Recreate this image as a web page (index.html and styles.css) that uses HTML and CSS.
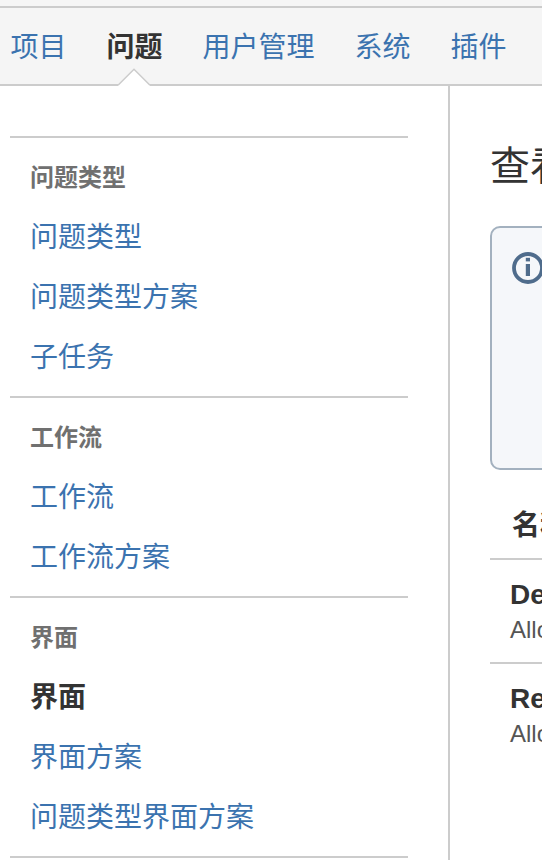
FILE: index.html
```html
<!DOCTYPE html>
<html lang="zh-CN">
<head>
    <meta charset="UTF-8">
    <meta name="viewport" content="width=device-width, initial-scale=1.0">
    <title>界面</title>
    <link rel="stylesheet" href="styles.css">
</head>
<body>
    <nav class="admin-nav">
        <a class="nav-item" href="#">项目</a>
        <a class="nav-item nav-active" href="#">问题
            <svg class="nav-arrow" width="34" height="18" viewBox="0 0 34 18">
                <path d="M1 18V17L17 1.5L33 17V18Z" fill="#fff"/>
                <path d="M1 17.3L17 1.3L33 17.3" fill="none" stroke="#ccc" stroke-width="1.5"/>
            </svg>
        </a>
        <a class="nav-item" href="#">用户管理</a>
        <a class="nav-item" href="#">系统</a>
        <a class="nav-item" href="#">插件</a>
    </nav>

    <div class="page">
        <aside class="sidebar">
            <div class="menu-group">
                <h4 class="menu-title">问题类型</h4>
                <a class="menu-link" href="#">问题类型</a>
                <a class="menu-link" href="#">问题类型方案</a>
                <a class="menu-link" href="#">子任务</a>
            </div>
            <div class="menu-group">
                <h4 class="menu-title">工作流</h4>
                <a class="menu-link" href="#">工作流</a>
                <a class="menu-link" href="#">工作流方案</a>
            </div>
            <div class="menu-group">
                <h4 class="menu-title">界面</h4>
                <a class="menu-link menu-active" href="#">界面</a>
                <a class="menu-link" href="#">界面方案</a>
                <a class="menu-link" href="#">问题类型界面方案</a>
            </div>
            <div class="menu-group"></div>
        </aside>

        <main class="content">
            <h1 class="page-title">查看</h1>
            <div class="info-box">
                <svg class="info-icon" width="32" height="32" viewBox="0 0 32 32">
                    <circle cx="16" cy="16" r="14" fill="none" stroke="#4f6c8c" stroke-width="3.8"/>
                    <rect x="13.8" y="5.8" width="4.2" height="3.6" fill="#4f6c8c"/>
                    <rect x="13.8" y="12" width="4.2" height="12" fill="#4f6c8c"/>
                </svg>
            </div>
            <div class="table">
                <div class="table-head">名称</div>
                <div class="table-row">
                    <div class="row-name">De</div>
                    <div class="row-desc">Allo</div>
                </div>
                <div class="table-row">
                    <div class="row-name">Re</div>
                    <div class="row-desc">Allo</div>
                </div>
            </div>
        </main>
    </div>
</body>
</html>
```

FILE: styles.css
```css
* {
    margin: 0;
    padding: 0;
    box-sizing: border-box;
}

body {
    height: 860px;
    overflow: hidden;
    display: flex;
    flex-direction: column;
    font-family: "Liberation Sans", Arial, "Noto Sans CJK SC", sans-serif;
    font-size: 28px;
    color: #333;
    background: #fff;
    border-top: 6px solid #f5f5f5;
}

a {
    color: #3b73af;
    text-decoration: none;
}

.admin-nav {
    flex: none;
    display: flex;
    gap: 40px;
    height: 80px;
    padding-left: 10.5px;
    background: #f5f5f5;
    border-top: 2px solid #ccc;
    border-bottom: 2px solid #ccc;
}

.nav-item {
    position: relative;
    height: 76px;
    padding-top: 2px;
    line-height: 76px;
    white-space: nowrap;
}

.nav-active {
    color: #333;
    font-weight: bold;
}

/* pointer over the bottom border of the bar */
.nav-arrow {
    position: absolute;
    left: 10.5px;
    bottom: -2px;
}

.page {
    flex: 1;
    display: flex;
    min-height: 0;
}

.sidebar {
    flex: none;
    width: 450px;
    padding: 50px 40px 0 10px;
    border-right: 2px solid #ccc;
}

.menu-group {
    padding: 20px 0 8px 20px;
    border-top: 2px solid #ccc;
}

.menu-title {
    margin-bottom: 10px;
    font-size: 24px;
    line-height: 40px;
    color: #707070;
}

.menu-link {
    display: block;
    line-height: 60px;
}

.menu-active {
    color: #333;
    font-weight: bold;
}

.content {
    flex: 1;
    min-width: 0;
    padding: 50px 0 0 40px;
    overflow: hidden;
    white-space: nowrap;
}

.page-title {
    font-size: 40px;
    font-weight: normal;
    line-height: 60px;
    margin-bottom: 30px;
}

.info-box {
    width: 400px;
    height: 244px;
    padding: 24px 20px;
    background: #f5f7fa;
    border: 2px solid #a3b1bf;
    border-radius: 10px;
}

.table-head {
    height: 90px;
    padding: 36px 0 0 22px;
    line-height: 40px;
    font-weight: bold;
    border-bottom: 2px solid #ccc;
}

.table-row {
    height: 104px;
    padding: 17px 0 0 20px;
    border-bottom: 2px solid #ccc;
}

.table-row:last-child {
    border-bottom: none;
}

.row-name {
    font-weight: bold;
    line-height: 36px;
}

.row-desc {
    font-size: 24px;
    line-height: 34px;
    color: #555;
}
```
